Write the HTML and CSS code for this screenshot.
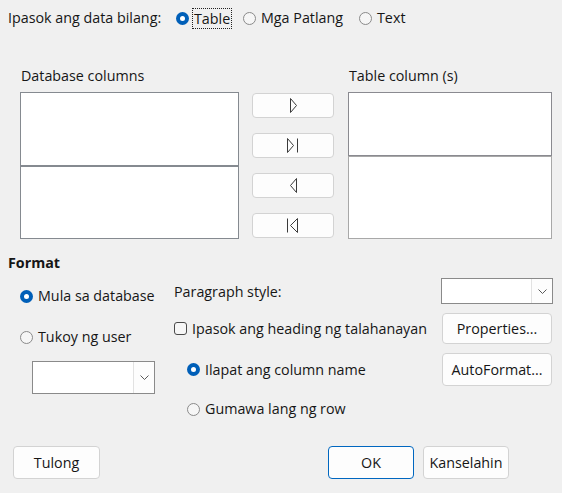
FILE: index.html
```html
<!DOCTYPE html>
<html lang="tl">
<head>
<meta charset="utf-8">
<title>Ipasok ang database columns</title>
<link rel="stylesheet" href="styles.css">
</head>
<body>
<div class="dialog">
  <div class="source-row">
    <span class="source-label">Ipasok ang data bilang:</span>
    <label class="opt opt-table"><span class="radio checked"></span><span class="focus">Table</span></label>
    <label class="opt opt-fields"><span class="radio"></span><span>Mga Patlang</span></label>
    <label class="opt"><span class="radio"></span><span>Text</span></label>
  </div>

  <div class="transfer">
    <div class="col col-db">
      <div class="col-label">Database columns</div>
      <div class="list list-db-top"></div>
      <div class="list list-db-bottom"></div>
    </div>
    <div class="arrows">
      <button class="btn arrow-btn" type="button" aria-label="Ilipat">
        <svg width="9" height="15" viewBox="0 0 9 15"><polygon points="1.5,0.5 7.5,7.5 1.5,14.5" fill="none" stroke="#3a3a3a" stroke-width="1"/></svg>
      </button>
      <button class="btn arrow-btn" type="button" aria-label="Ilipat lahat">
        <svg width="12" height="15" viewBox="0 0 12 15"><polygon points="0.5,0.5 6.5,7.5 0.5,14.5" fill="none" stroke="#3a3a3a" stroke-width="1"/><line x1="10.5" y1="0.5" x2="10.5" y2="14.5" stroke="#3a3a3a" stroke-width="1"/></svg>
      </button>
      <button class="btn arrow-btn" type="button" aria-label="Alisin">
        <svg width="9" height="15" viewBox="0 0 9 15"><polygon points="7.5,0.5 1.5,7.5 7.5,14.5" fill="none" stroke="#3a3a3a" stroke-width="1"/></svg>
      </button>
      <button class="btn arrow-btn" type="button" aria-label="Alisin lahat">
        <svg width="12" height="15" viewBox="0 0 12 15"><line x1="0.5" y1="0.5" x2="0.5" y2="14.5" stroke="#3a3a3a" stroke-width="1"/><polygon points="10.5,0.5 3.5,7.5 10.5,14.5" fill="none" stroke="#3a3a3a" stroke-width="1"/></svg>
      </button>
    </div>
    <div class="col col-table">
      <div class="col-label">Table column (s)</div>
      <div class="list list-tb-top"></div>
      <div class="list list-tb-bottom"></div>
    </div>
  </div>

  <div class="format-title">Format</div>
  <div class="format">
    <div class="format-left">
      <label class="opt-row"><span class="radio checked"></span><span>Mula sa database</span></label>
      <label class="opt-row opt-user"><span class="radio"></span><span>Tukoy ng user</span></label>
      <div class="combo combo-user"><span class="combo-field"></span><span class="combo-btn"><svg width="9" height="5" viewBox="0 0 9 5"><polyline points="0.5,0.5 4.5,4.5 8.5,0.5" fill="none" stroke="#5a5a5a" stroke-width="1"/></svg></span></div>
    </div>
    <div class="format-right">
      <span class="row-label">Paragraph style:</span>
      <div class="combo combo-para"><span class="combo-field"></span><span class="combo-btn"><svg width="9" height="5" viewBox="0 0 9 5"><polyline points="0.5,0.5 4.5,4.5 8.5,0.5" fill="none" stroke="#5a5a5a" stroke-width="1"/></svg></span></div>

      <label class="opt-row"><span class="checkbox"></span><span>Ipasok ang heading ng talahanayan</span></label>
      <button class="btn side-btn" type="button">Properties...</button>

      <label class="opt-row indent"><span class="radio checked"></span><span>Ilapat ang column name</span></label>
      <button class="btn side-btn" type="button">AutoFormat...</button>

      <label class="opt-row indent last-row"><span class="radio"></span><span>Gumawa lang ng row</span></label>
      <span></span>
    </div>
  </div>

  <div class="footer">
    <button class="btn foot-btn help-btn" type="button">Tulong</button>
    <button class="btn foot-btn ok-btn" type="button">OK</button>
    <button class="btn foot-btn" type="button">Kanselahin</button>
  </div>
</div>
</body>
</html>
```
FILE: styles.css
```css
* { box-sizing: border-box; }
html, body { margin: 0; padding: 0; }
body {
  background: #f0f0f0;
  font-family: "Open Sans", "Noto Sans", sans-serif;
  font-size: 14.3px;
  color: #161616;
}
.dialog {
  width: 562px;
  height: 493px;
  overflow: hidden;
}

/* top row */
.source-row {
  display: flex;
  align-items: center;
  height: 20px;
  margin-top: 8px;
  padding-left: 8px;
  line-height: 20px;
}
.source-label { width: 168px; }
.opt { display: flex; align-items: center; gap: 5px; }
.opt-table { width: 67px; }
.opt-fields { width: 116px; }
.focus {
  outline: 1px dotted #222;
  padding: 0 1px;
  line-height: 19px;
  margin-left: -1px;
}

.radio {
  width: 13px;
  height: 13px;
  border-radius: 50%;
  border: 1px solid #8a8a8a;
  background: #f6f6f6;
  flex: none;
  position: relative;
}
.radio.checked {
  border: none;
  background: #005fb8;
}
.radio.checked::after {
  content: "";
  position: absolute;
  left: 4px;
  top: 4px;
  width: 5px;
  height: 5px;
  border-radius: 50%;
  background: #fff;
}
.checkbox {
  width: 13px;
  height: 13px;
  border: 1px solid #4a4a4a;
  border-radius: 3px;
  background: #f6f6f6;
  flex: none;
}

/* transfer area */
.transfer {
  display: flex;
  margin-top: 38px;
  padding-left: 20px;
}
.col-label {
  line-height: 20px;
  height: 20px;
  margin-bottom: 6px;
  padding-left: 1px;
}
.col-db { width: 219px; }
.col-table { width: 204px; margin-left: 14px; }
.list {
  background: #fff;
  border: 1px solid #858a90;
}
.list-db-top { height: 74px; }
.list-db-bottom { height: 73px; }
.list-tb-top { height: 64px; border-color: #8a8a90; }
.list-tb-bottom { height: 83px; border-color: #a8a8a8; }

.arrows {
  width: 82px;
  margin-left: 13px;
  padding-top: 27px;
  display: flex;
  flex-direction: column;
  gap: 15px;
}

.btn {
  font: inherit;
  color: inherit;
  background: #fdfdfd;
  border: 1px solid #d3d3d3;
  border-radius: 4px;
  padding: 0;
  display: flex;
  align-items: center;
  justify-content: center;
}
.arrow-btn { height: 25px; width: 82px; }
.arrow-btn svg { display: block; }

/* format */
.format-title {
  margin-top: 14px;
  padding-left: 8px;
  line-height: 20px;
  font-weight: 700;
}
.format {
  display: flex;
  margin-top: 5px;
}
.format-left {
  width: 154px;
  margin-left: 20px;
  padding-top: 8px;
}
.opt-row {
  display: flex;
  align-items: center;
  gap: 5px;
  line-height: 20px;
  height: 20px;
}
.opt-user { margin-top: 21px; }
.combo {
  display: flex;
  background: #fff;
  border: 1px solid #8a8a8a;
}
.combo-field { flex: 1; }
.combo-btn {
  width: 21px;
  display: flex;
  align-items: center;
  justify-content: center;
  background: #fdfdfd;
  border-left: 1px solid #e2e2e2;
}
.combo-user {
  margin-top: 14px;
  margin-left: 12px;
  width: 123px;
  height: 33px;
}

.format-right {
  width: 379px;
  display: grid;
  grid-template-columns: 267px 112px;
  grid-template-rows: 26px 31px 33px 24px;
  row-gap: 9px;
  align-items: center;
}
.last-row { align-self: end; }
.combo-para { width: 112px; height: 26px; }
.side-btn { width: 110px; height: 100%; margin-left: 1px; }
.opt-row.indent { padding-left: 13px; }

/* footer */
.footer {
  display: flex;
  margin-top: 27px;
  padding: 0 53px 0 13px;
}
.foot-btn { width: 86px; height: 33px; }
.help-btn { width: 87px; margin-right: auto; }
.ok-btn { border-color: #0067c0; margin-right: 9px; }
```
